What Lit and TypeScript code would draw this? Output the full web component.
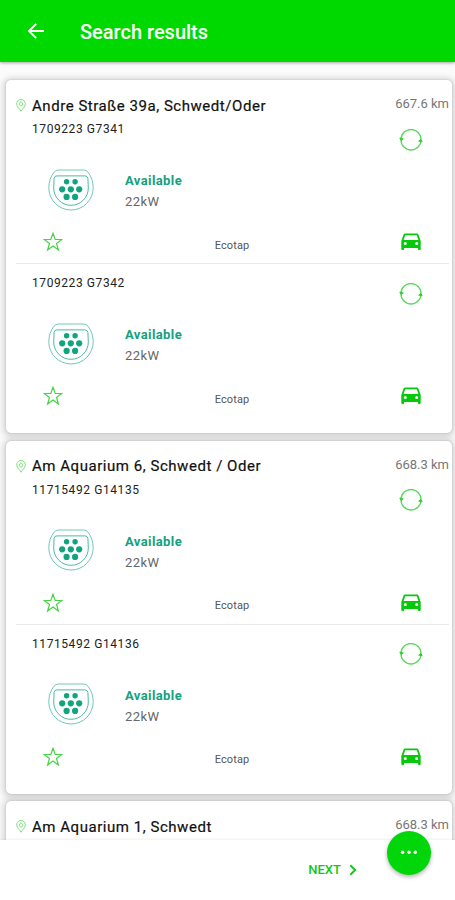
import { LitElement, html, css } from "lit";
import { customElement, property } from "lit/decorators.js";

interface Station {
  address: string;
  distance: string;
  points: string[];
}

const STATIONS: Station[] = [
  { address: "Andre Straße 39a, Schwedt/Oder", distance: "667.6 km", points: ["1709223 G7341", "1709223 G7342"] },
  { address: "Am Aquarium 6, Schwedt / Oder", distance: "668.3 km", points: ["11715492 G14135", "11715492 G14136"] },
  { address: "Am Aquarium 1, Schwedt", distance: "668.3 km", points: [] },
];

const pinIcon = html`<svg width="10" height="13" viewBox="0 0 10 13" fill="none" stroke="#6ddf6d" stroke-width=".9">
  <path d="M5 12.2C3.6 9.7.7 7.7.7 4.8a4.3 4.3 0 0 1 8.6 0C9.3 7.7 6.4 9.7 5 12.2Z" />
  <path d="M5 2.6 7.1 5 5 7.4 2.9 5Z" />
</svg>`;

const refreshIcon = html`<svg width="24" height="22" viewBox="0 0 24 22" fill="none" stroke="#58d858" stroke-width="1.3">
  <path d="M2 10A10 10 0 0 1 22 11A10 10 0 0 1 2 11" />
  <path d="M.8 9.1 2.2 11.6 4.3 9.9ZM19.7 12.1 21.8 10.4 23.2 12.8Z" fill="#35cf35" stroke="#35cf35" stroke-width="1" stroke-linejoin="round" />
</svg>`;

const plugIcon = html`<svg width="46" height="42" viewBox="0 0 46 42" fill="none" stroke="#12a37f">
  <path stroke-width="1" stroke-opacity=".6" d="M10.4 1H35.6Q38.3 1 40 3.2C43.4 7.5 45.2 13 45.2 18.8A22.2 22.2 0 0 1 .8 18.8C.8 13 2.6 7.5 6 3.2Q7.7 1 10.4 1Z" />
  <path stroke-width="1" stroke-opacity=".75" d="M9 6.9H37Q39.5 6.9 39.9 9.3L40.3 19A17.3 17.3 0 0 1 5.7 19L6.1 9.3Q6.5 6.9 9 6.9Z" />
  <g fill="#12a37f" stroke="none">
    <circle cx="18.6" cy="12.8" r="2.7" /><circle cx="27.1" cy="12.8" r="2.7" />
    <circle cx="14.2" cy="20.3" r="3.1" /><circle cx="22.8" cy="20.3" r="3.1" /><circle cx="31.2" cy="20.3" r="3.1" />
    <circle cx="18.6" cy="27.9" r="3.1" /><circle cx="27.1" cy="27.9" r="3.1" />
  </g>
</svg>`;

const starIcon = html`<svg width="20" height="20" viewBox="0 0 20 20" fill="none" stroke="#46d346" stroke-width="1.2">
  <path d="M10 1.3 12.2 7.5H18.8L13.5 11.5 15.4 18 10 14.1 4.6 18 6.5 11.5 1.2 7.5H7.8Z" />
</svg>`;

const carIcon = html`<svg width="20" height="18" viewBox="0 0 20 18">
  <path
    fill="#08c80c" fill-rule="evenodd"
    d="M4.2.6H15.8Q17.2.6 17.6 1.9L19.7 8V16Q19.7 17 18.7 17H17.9Q16.9 17 16.9 16V15.1H3.1V16Q3.1 17 2.1 17H1.3Q.3 17 .3 16V8L2.4 1.9Q2.8.6 4.2.6ZM4.2 2.2 2.6 6.9H17.4L15.8 2.2ZM4.3 9A1.5 1.5 0 1 0 4.3 12 1.5 1.5 0 1 0 4.3 9ZM15.7 9A1.5 1.5 0 1 0 15.7 12 1.5 1.5 0 1 0 15.7 9Z"
  />
</svg>`;

@customElement("charge-point")
class ChargePoint extends LitElement {
  @property() name = "";

  static styles = css`
    :host {
      display: block;
      height: 145px;
    }
    svg {
      display: block;
    }
    .top {
      display: flex;
      justify-content: space-between;
      height: 41px;
      padding: 0 29px 0 26px;
    }
    .id {
      font-size: 12px;
      line-height: 23.5px;
      letter-spacing: 0.58px;
      color: #222;
    }
    .refresh {
      padding-top: 10.5px;
    }
    .middle {
      display: flex;
      height: 65px;
      padding-left: 42px;
    }
    .plug {
      padding-top: 9.5px;
      width: 77px;
    }
    .info {
      padding-top: 11px;
      line-height: 21px;
      font-size: 13px;
    }
    .state {
      font-weight: 700;
      font-size: 13px;
      letter-spacing: 0.4px;
      color: #14a07d;
    }
    .power {
      letter-spacing: 0.45px;
      color: #666;
    }
    .bottom {
      display: grid;
      grid-template-columns: 60px 1fr 60px;
      height: 36px;
      padding: 0 31px 0 37px;
      align-items: center;
    }
    .operator {
      text-align: center;
      font-size: 11px;
      line-height: 14px;
      padding-top: 7px;
      letter-spacing: 0.1px;
      color: #555;
    }
    .car {
      justify-self: end;
    }
  `;

  render() {
    return html`
      <div class="top">
        <div class="id">${this.name}</div>
        <div class="refresh">${refreshIcon}</div>
      </div>
      <div class="middle">
        <div class="plug">${plugIcon}</div>
        <div class="info">
          <div class="state">Available</div>
          <div class="power">22kW</div>
        </div>
      </div>
      <div class="bottom">
        <div>${starIcon}</div>
        <div class="operator">Ecotap</div>
        <div class="car">${carIcon}</div>
      </div>
    `;
  }
}

@customElement("app-root")
class AppRoot extends LitElement {
  static styles = css`
    :host {
      display: flex;
      flex-direction: column;
      height: 900px;
      width: 455px;
      overflow: hidden;
      position: relative;
      font-family: Roboto, "Liberation Sans", sans-serif;
      background: #fff;
    }
    svg {
      display: block;
    }
    .bar {
      flex: none;
      display: flex;
      align-items: center;
      box-sizing: border-box;
      height: 62px;
      padding-left: 27px;
      background: #00d900;
      color: #fff;
      box-shadow: 0 1px 3px rgba(0, 0, 0, 0.35);
      z-index: 1;
    }
    .title {
      margin-left: 35px;
      padding-top: 2px;
      font-size: 20px;
      font-weight: 500;
      letter-spacing: 0;
    }
    .list {
      flex: none;
      box-sizing: border-box;
      height: 778px;
      overflow: hidden;
      padding: 18px 3px 0 6px;
      display: flex;
      flex-direction: column;
      gap: 7.5px;
      background: #fbfbfb;
    }
    .card {
      flex: none;
      box-sizing: border-box;
      height: 353px;
      background: #fff;
      border-radius: 5px;
      box-shadow: 0 0 2px rgba(0, 0, 0, 0.18), 0 1px 6px 3px rgba(0, 0, 0, 0.15);
    }
    .head {
      display: flex;
      align-items: center;
      height: 38px;
      box-sizing: border-box;
      padding: 13px 3px 0 10px;
    }
    .address {
      flex: 1;
      margin-left: 6px;
      font-size: 15px;
      letter-spacing: 0.54px;
      color: #111;
      -webkit-text-stroke: 0.2px #111;
    }
    .distance {
      font-size: 13px;
      letter-spacing: 0;
      padding-bottom: 4px;
      color: #777;
    }
    .rule {
      height: 1px;
      margin: 0 3px 8px 10px;
      background: #e8e8e8;
    }
    .footer {
      flex: 1;
      display: flex;
      justify-content: flex-end;
      align-items: center;
      background: #fff;
      padding-right: 98px;
      z-index: 1;
      box-shadow: 0 -1px 2px rgba(0, 0, 0, 0.06);
    }
    .next {
      display: flex;
      align-items: center;
      gap: 8px;
      font-size: 13px;
      font-weight: 500;
      padding-bottom: 1px;
      color: #10c914;
    }
    .fab {
      position: absolute;
      right: 24px;
      top: 831px;
      width: 44px;
      height: 44px;
      border-radius: 50%;
      background: #00d60a;
      box-shadow: 0 2px 4px rgba(0, 0, 0, 0.3);
      z-index: 2;
    }
  `;

  render() {
    return html`
      <div class="bar">
        <svg width="18" height="18" viewBox="0 0 18 18" fill="none" stroke="#fff" stroke-width="1.9">
          <path d="M17 9H2.5M9.2 1.8 2 9l7.2 7.2" />
        </svg>
        <div class="title">Search results</div>
      </div>
      <div class="list">
        ${STATIONS.map(
          (s) => html`<div class="card">
            <div class="head">
              ${pinIcon}
              <div class="address">${s.address}</div>
              <div class="distance">${s.distance}</div>
            </div>
            ${s.points.map(
              (p, i) => html`${i ? html`<div class="rule"></div>` : ""}<charge-point .name=${p}></charge-point>`
            )}
          </div>`
        )}
      </div>
      <div class="footer">
        <div class="next">
          <span>NEXT</span>
          <svg width="8" height="12" viewBox="0 0 8 12" fill="none" stroke="#10c914" stroke-width="1.9">
            <path d="M1.3 1.2 6.2 6 1.3 10.8" />
          </svg>
        </div>
      </div>
      <div class="fab">
        <svg width="44" height="44" viewBox="0 0 44 44" fill="#fff">
          <circle cx="15.6" cy="21.3" r="1.7" /><circle cx="22" cy="21.3" r="1.7" /><circle cx="28.3" cy="21.3" r="1.7" />
        </svg>
      </div>
    `;
  }
}
